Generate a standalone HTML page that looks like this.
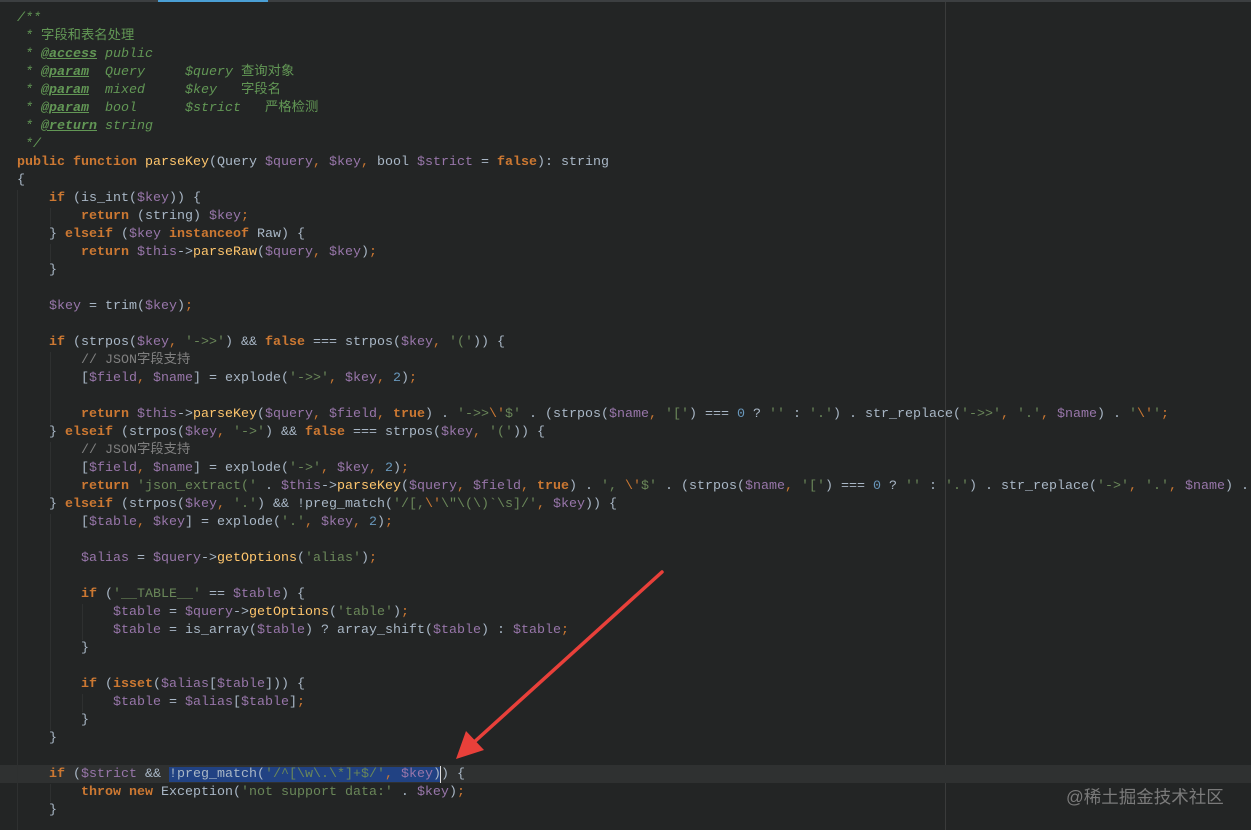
<!DOCTYPE html>
<html><head><meta charset="utf-8"><style>
html,body{margin:0;padding:0;background:#232525;width:1251px;height:830px;overflow:hidden;position:relative}
#top{position:absolute;left:0;top:0;width:1251px;height:2px;background:#3c3f41}
#tab{position:absolute;left:158px;top:0;width:110px;height:2px;background:#4a9fd5}
#margin{position:absolute;left:945px;top:2px;width:1px;height:828px;background:#3a3b3b}
.guide{position:absolute;width:1px;background:#2e3030}
#cur{position:absolute;left:0;top:765px;width:1251px;height:18px;background:#2f3131}
pre{position:absolute;left:17px;top:10px;margin:0;font-family:"Liberation Mono","Noto Sans CJK SC",monospace;font-size:13.33px;line-height:18px;color:#a9b7c6;white-space:pre}
.k{color:#cc7832;font-weight:bold}.p{color:#cc7832}.v{color:#9876aa}.s{color:#6a8759}.f{color:#ffc66d}.n{color:#6897bb}
.c{color:#808080}.d{color:#629755;font-style:italic}.t{color:#629755;font-weight:bold;font-style:italic;text-decoration:underline}
.z{font-style:normal}
.sel{background:#214283}
#wm{position:absolute;left:1066px;top:784px;font-family:"Liberation Sans","Noto Sans CJK SC",sans-serif;font-size:17.5px;color:#7a7a7a}
</style></head><body>
<div id="top"></div><div id="tab"></div><div id="margin"></div>
<div id="cur"></div>
<div class="guide" style="left:17px;top:190px;height:640px"></div>
<div class="guide" style="left:50px;top:208px;height:18px"></div>
<div class="guide" style="left:50px;top:244px;height:18px"></div>
<div class="guide" style="left:50px;top:352px;height:72px"></div>
<div class="guide" style="left:50px;top:442px;height:54px"></div>
<div class="guide" style="left:50px;top:514px;height:216px"></div>
<div class="guide" style="left:82px;top:604px;height:36px"></div>
<div class="guide" style="left:82px;top:694px;height:18px"></div>
<div class="guide" style="left:50px;top:784px;height:18px"></div>
<pre><span class="d">/**
 * <span class="z">字段和表名处理</span>
 * </span><span class="t">@access</span><span class="d"> public
 * </span><span class="t">@param</span><span class="d">  Query     $query <span class="z">查询对象</span>
 * </span><span class="t">@param</span><span class="d">  mixed     $key   <span class="z">字段名</span>
 * </span><span class="t">@param</span><span class="d">  bool      $strict   <span class="z">严格检测</span>
 * </span><span class="t">@return</span><span class="d"> string
 */</span>
<span class="k">public function </span><span class="f">parseKey</span>(Query <span class="v">$query</span><span class="p">, </span><span class="v">$key</span><span class="p">, </span>bool <span class="v">$strict</span> = <span class="k">false</span>): string
{
    <span class="k">if</span> (is_int(<span class="v">$key</span>)) {
        <span class="k">return</span> (string) <span class="v">$key</span><span class="p">;</span>
    } <span class="k">elseif</span> (<span class="v">$key</span> <span class="k">instanceof</span> Raw) {
        <span class="k">return</span> <span class="v">$this</span>-&gt;<span class="f">parseRaw</span>(<span class="v">$query</span><span class="p">, </span><span class="v">$key</span>)<span class="p">;</span>
    }

    <span class="v">$key</span> = trim(<span class="v">$key</span>)<span class="p">;</span>

    <span class="k">if</span> (strpos(<span class="v">$key</span><span class="p">, </span><span class="s">'-&gt;&gt;'</span>) &amp;&amp; <span class="k">false</span> === strpos(<span class="v">$key</span><span class="p">, </span><span class="s">'('</span>)) {
        <span class="c">// JSON字段支持</span>
        [<span class="v">$field</span><span class="p">, </span><span class="v">$name</span>] = explode(<span class="s">'-&gt;&gt;'</span><span class="p">, </span><span class="v">$key</span><span class="p">, </span><span class="n">2</span>)<span class="p">;</span>

        <span class="k">return</span> <span class="v">$this</span>-&gt;<span class="f">parseKey</span>(<span class="v">$query</span><span class="p">, </span><span class="v">$field</span><span class="p">, </span><span class="k">true</span>) . <span class="s">'-&gt;&gt;</span><span class="p">\'</span><span class="s">$'</span> . (strpos(<span class="v">$name</span><span class="p">, </span><span class="s">'['</span>) === <span class="n">0</span> ? <span class="s">''</span> : <span class="s">'.'</span>) . str_replace(<span class="s">'-&gt;&gt;'</span><span class="p">, </span><span class="s">'.'</span><span class="p">, </span><span class="v">$name</span>) . <span class="s">'</span><span class="p">\'</span><span class="s">'</span><span class="p">;</span>
    } <span class="k">elseif</span> (strpos(<span class="v">$key</span><span class="p">, </span><span class="s">'-&gt;'</span>) &amp;&amp; <span class="k">false</span> === strpos(<span class="v">$key</span><span class="p">, </span><span class="s">'('</span>)) {
        <span class="c">// JSON字段支持</span>
        [<span class="v">$field</span><span class="p">, </span><span class="v">$name</span>] = explode(<span class="s">'-&gt;'</span><span class="p">, </span><span class="v">$key</span><span class="p">, </span><span class="n">2</span>)<span class="p">;</span>
        <span class="k">return</span> <span class="s">'json_extract('</span> . <span class="v">$this</span>-&gt;<span class="f">parseKey</span>(<span class="v">$query</span><span class="p">, </span><span class="v">$field</span><span class="p">, </span><span class="k">true</span>) . <span class="s">', </span><span class="p">\'</span><span class="s">$'</span> . (strpos(<span class="v">$name</span><span class="p">, </span><span class="s">'['</span>) === <span class="n">0</span> ? <span class="s">''</span> : <span class="s">'.'</span>) . str_replace(<span class="s">'-&gt;'</span><span class="p">, </span><span class="s">'.'</span><span class="p">, </span><span class="v">$name</span>) . <span class="s">'</span><span class="p">\'</span><span class="s">)'</span><span class="p">;</span>
    } <span class="k">elseif</span> (strpos(<span class="v">$key</span><span class="p">, </span><span class="s">'.'</span>) &amp;&amp; !preg_match(<span class="s">'/[,</span><span class="p">\'</span><span class="s">\"\(\)`\s]/'</span><span class="p">, </span><span class="v">$key</span>)) {
        [<span class="v">$table</span><span class="p">, </span><span class="v">$key</span>] = explode(<span class="s">'.'</span><span class="p">, </span><span class="v">$key</span><span class="p">, </span><span class="n">2</span>)<span class="p">;</span>

        <span class="v">$alias</span> = <span class="v">$query</span>-&gt;<span class="f">getOptions</span>(<span class="s">'alias'</span>)<span class="p">;</span>

        <span class="k">if</span> (<span class="s">'__TABLE__'</span> == <span class="v">$table</span>) {
            <span class="v">$table</span> = <span class="v">$query</span>-&gt;<span class="f">getOptions</span>(<span class="s">'table'</span>)<span class="p">;</span>
            <span class="v">$table</span> = is_array(<span class="v">$table</span>) ? array_shift(<span class="v">$table</span>) : <span class="v">$table</span><span class="p">;</span>
        }

        <span class="k">if</span> (<span class="k">isset</span>(<span class="v">$alias</span>[<span class="v">$table</span>])) {
            <span class="v">$table</span> = <span class="v">$alias</span>[<span class="v">$table</span>]<span class="p">;</span>
        }
    }

    <span class="k">if</span> (<span class="v">$strict</span> &amp;&amp; <span class="sel">!preg_match(<span class="s">'/^[\w\.\*]+$/'</span><span class="p">, </span><span class="v">$key</span>)</span>) {
        <span class="k">throw new</span> Exception(<span class="s">'not support data:'</span> . <span class="v">$key</span>)<span class="p">;</span>
    }
</pre>
<div style="position:absolute;left:440px;top:766px;width:1px;height:17px;background:#ddd"></div>
<svg style="position:absolute;left:0;top:0" width="1251" height="830">
<line x1="662" y1="572" x2="472" y2="744" stroke="#e8403a" stroke-width="3.5" stroke-linecap="round"/>
<polygon points="456,759 466,731 484,750" fill="#e8403a"/>
</svg>
<div id="wm">@稀土掘金技术社区</div>
</body></html>
